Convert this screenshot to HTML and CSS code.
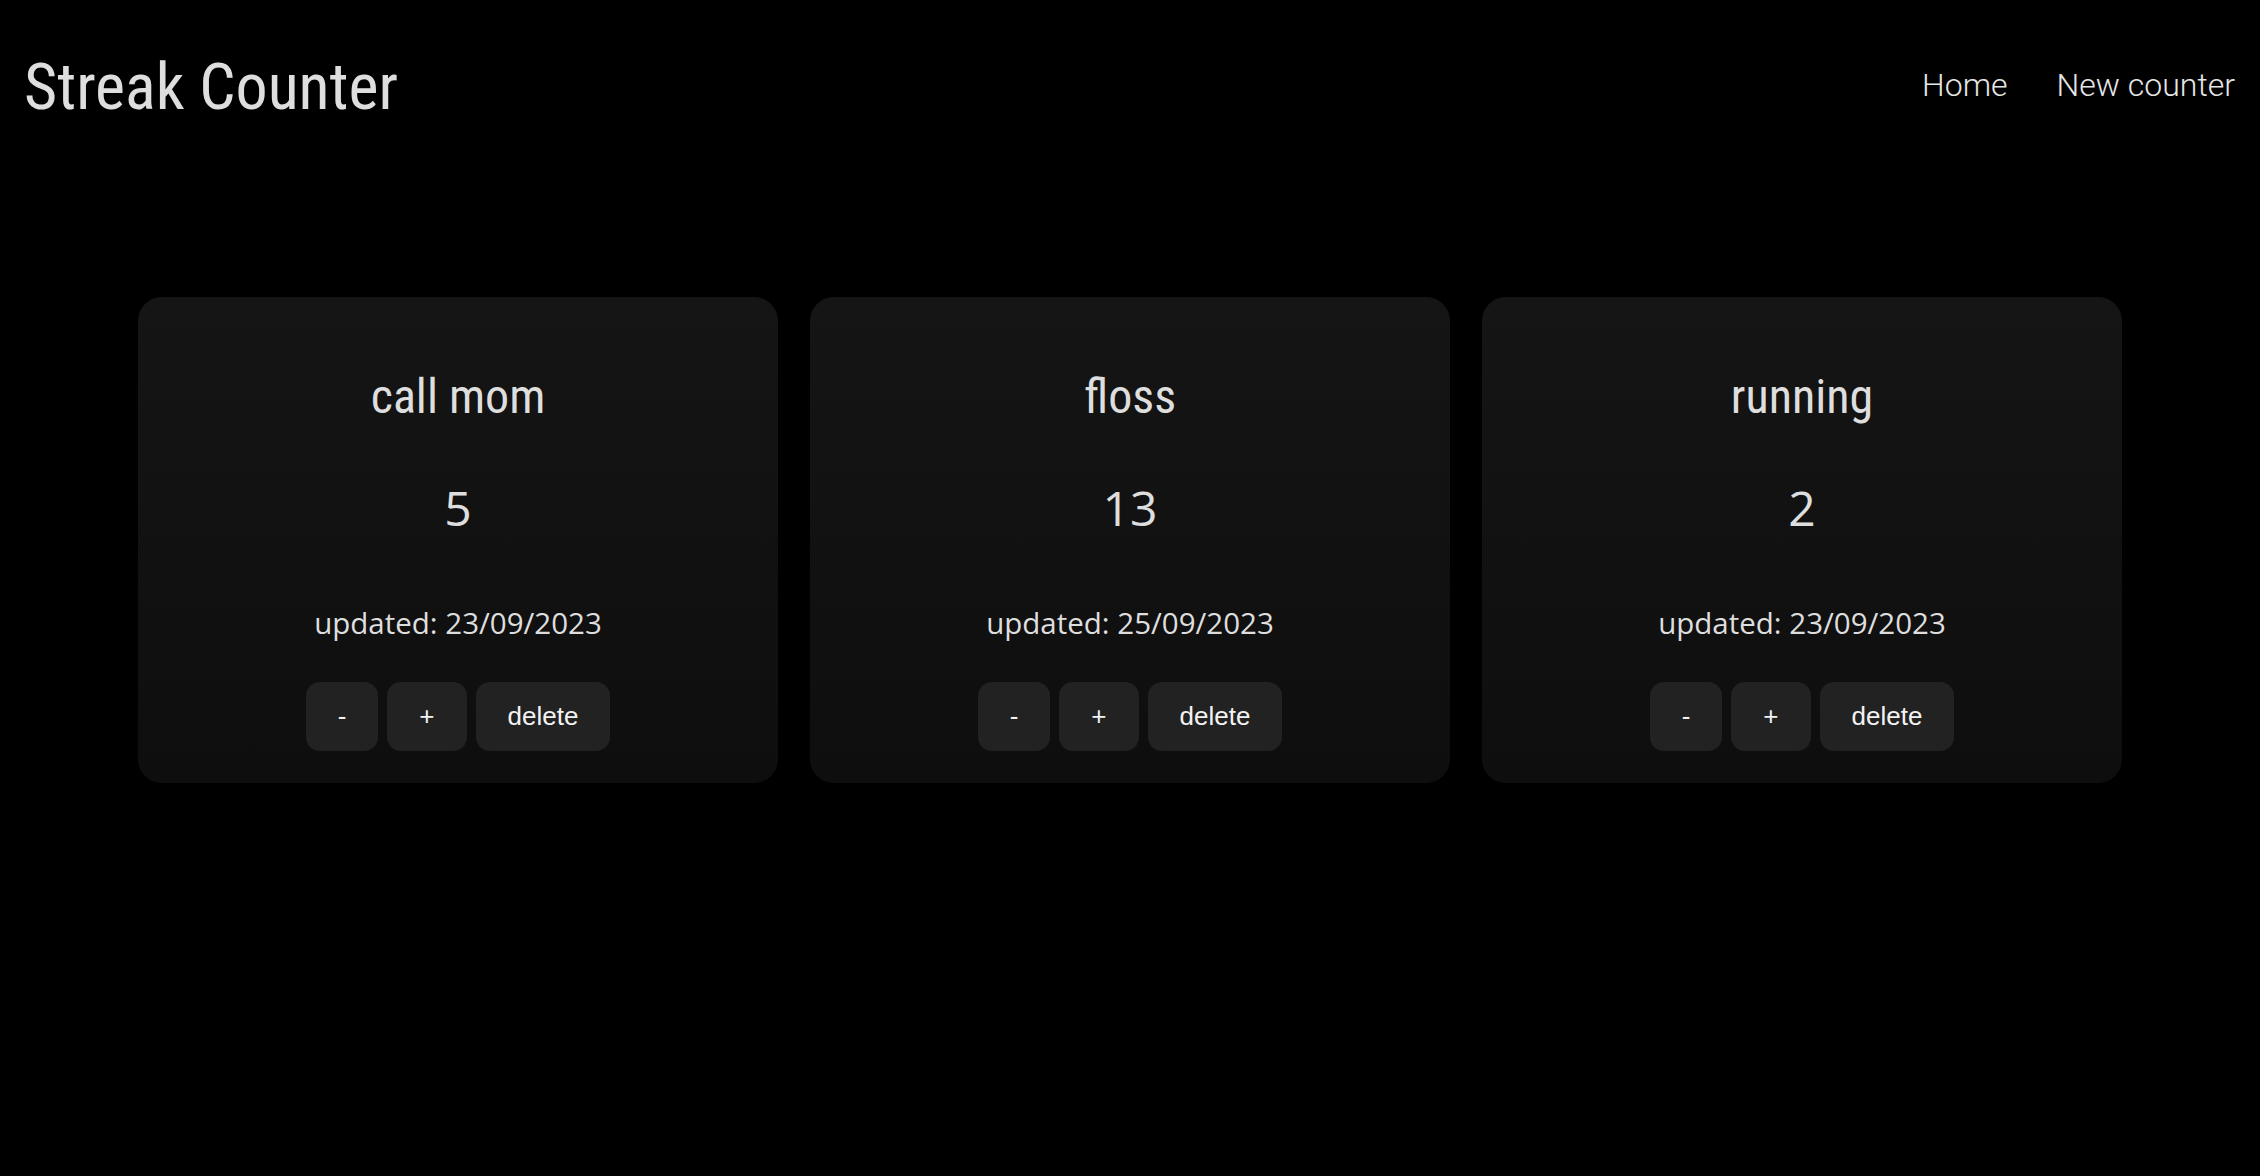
FILE: index.html
```html
<!DOCTYPE html>
<html lang="en">
<head>
<meta charset="utf-8">
<title>Streak Counter</title>
<link rel="stylesheet" href="styles.css">
</head>
<body>
<header class="topbar">
  <h1 class="brand">Streak Counter</h1>
  <nav class="nav">
    <a class="nav-link" href="#">Home</a>
    <a class="nav-link" href="#">New counter</a>
  </nav>
</header>
<main class="board">
  <section class="card">
    <h2 class="card-title">call mom</h2>
    <p class="card-count">5</p>
    <p class="card-date">updated: 23/09/2023</p>
    <div class="card-actions">
      <button class="btn">-</button>
      <button class="btn">+</button>
      <button class="btn">delete</button>
    </div>
  </section>
  <section class="card">
    <h2 class="card-title">floss</h2>
    <p class="card-count">13</p>
    <p class="card-date">updated: 25/09/2023</p>
    <div class="card-actions">
      <button class="btn">-</button>
      <button class="btn">+</button>
      <button class="btn">delete</button>
    </div>
  </section>
  <section class="card">
    <h2 class="card-title">running</h2>
    <p class="card-count">2</p>
    <p class="card-date">updated: 23/09/2023</p>
    <div class="card-actions">
      <button class="btn">-</button>
      <button class="btn">+</button>
      <button class="btn">delete</button>
    </div>
  </section>
</main>
</body>
</html>
```
FILE: styles.css
```css
html, body {
  margin: 0;
  padding: 0;
  background: #000;
  color: #dedede;
}

body {
  font-family: "Open Sans", "Noto Sans", sans-serif;
  min-height: 1176px;
}

.topbar {
  display: flex;
  justify-content: space-between;
  align-items: flex-start;
  padding: 50px 25px 0 24px;
}

.brand {
  margin: 0;
  font-family: "Roboto Condensed", Roboto, sans-serif;
  font-stretch: condensed;
  font-weight: 400;
  font-size: 64px;
  line-height: 1.2;
  color: #dedede;
}

.nav {
  display: flex;
  gap: 49px;
  margin-top: 16px;
}

.nav-link {
  font-family: Roboto, sans-serif;
  font-weight: 300;
  font-size: 32px;
  line-height: 1.2;
  color: #e6e6e6;
  text-decoration: none;
}

.board {
  display: grid;
  grid-template-columns: repeat(3, 640px);
  gap: 32px;
  justify-content: center;
  margin-top: 170px;
}

.card {
  display: flex;
  flex-direction: column;
  align-items: center;
  text-align: center;
  padding: 71px 32px 32px;
  border-radius: 24px;
  background: linear-gradient(180deg, #151515 0%, #0e0e0e 100%);
}

.card-title {
  margin: 0;
  font-family: "Roboto Condensed", Roboto, sans-serif;
  font-stretch: condensed;
  font-weight: 400;
  font-size: 48px;
  line-height: 1.2;
  color: #dedede;
}

.card-count {
  margin: 54px 0 0;
  font-size: 48px;
  line-height: 1.2;
  color: #dedede;
}

.card-date {
  margin: 68px 0 0;
  font-size: 29.5px;
  line-height: 1.2;
  color: #dedede;
}

.card-actions {
  display: flex;
  gap: 9px;
  margin-top: 42px;
}

.btn {
  height: 69px;
  padding: 0 32px;
  border: none;
  border-radius: 14px;
  background: #222;
  color: #f2f2f2;
  font-family: "Liberation Sans", Arial, sans-serif;
  font-size: 26px;
  cursor: pointer;
}
```
